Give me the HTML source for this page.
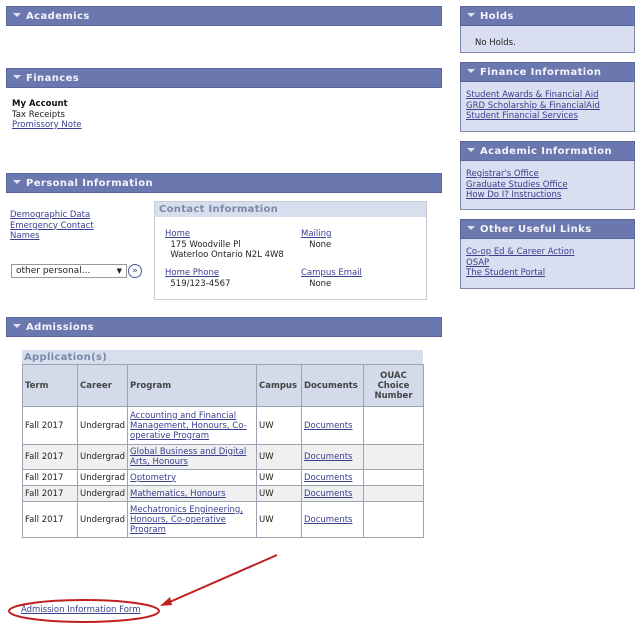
<!DOCTYPE html>
<html><head><style>
body{margin:0;width:640px;height:625px;background:#fff;position:relative;font-family:"DejaVu Sans","Liberation Sans",sans-serif;font-size:8.5px;color:#222;overflow:hidden}
.a{position:absolute}
.hd{position:absolute;background:#6b78b0;border:1px solid #58649a;color:#f4f4fa;font-weight:bold;font-size:10px;letter-spacing:.4px;box-sizing:border-box;height:20px;line-height:20px;padding-left:19px}
.hd:before{content:"";position:absolute;left:6px;top:6px;border-left:4px solid transparent;border-right:4px solid transparent;border-top:4px solid #dfe3f2}
a{color:#3a3f8f;text-decoration:underline}
.box{position:absolute;background:#d9dff0;border:1px solid #8088a8;box-sizing:border-box}
.box .hd{left:-1px;top:-1px;right:-1px}
.box .in{position:absolute;left:5px;top:27px;line-height:10.5px}
table{border-collapse:collapse;font-size:8.5px;table-layout:fixed}
td{border:1px solid #9da3b3;padding:0 2px;vertical-align:middle}
th{border:1px solid #9da3b3;background:#d3dbeb;color:#444;font-weight:bold;text-align:left;padding:0 2px}
</style></head><body>
<div class="hd" style="left:6px;top:6px;width:436px">Academics</div>
<div class="hd" style="left:6px;top:68px;width:436px">Finances</div>
<div class="a" style="left:12px;top:99px;line-height:10.5px"><b style="color:#111">My Account</b><br>Tax Receipts<br><a>Promissory Note</a></div>
<div class="hd" style="left:6px;top:173px;width:436px">Personal Information</div>
<div class="a" style="left:10px;top:210px;line-height:10.5px"><a>Demographic Data</a><br><a>Emergency Contact</a><br><a>Names</a></div>
<div class="a" style="left:11px;top:264px;width:116px;height:14px;border:1px solid #999;box-sizing:border-box;font-size:9px;line-height:12px;padding-left:4px">other personal...<span style="position:absolute;right:4px;font-size:7px">▼</span></div>
<div class="a" style="left:128px;top:264px;width:14px;height:14px;border:1px solid #4a5a9a;border-radius:50%;box-sizing:border-box;color:#3a4a8a;font-size:9px;line-height:12px;text-align:center">»</div>
<div class="a" style="left:154px;top:201px;width:273px;height:99px;border:1px solid #c6ccd8;box-sizing:border-box">
<div style="background:#d7dfee;height:15px;line-height:15px;padding-left:4px;color:#7a88aa;font-weight:bold;font-size:10px;letter-spacing:.3px">Contact Information</div>
<div class="a" style="left:10px;top:27px;line-height:10.5px"><a>Home</a><br>&nbsp;&nbsp;175 Woodville Pl<br>&nbsp;&nbsp;Waterloo Ontario N2L 4W8</div>
<div class="a" style="left:146px;top:27px;line-height:10.5px"><a>Mailing</a><br>&nbsp;&nbsp;&nbsp;None</div>
<div class="a" style="left:10px;top:66px;line-height:10.5px"><a>Home Phone</a><br>&nbsp;&nbsp;519/123-4567</div>
<div class="a" style="left:146px;top:66px;line-height:10.5px"><a>Campus Email</a><br>&nbsp;&nbsp;&nbsp;None</div>
</div>
<div class="hd" style="left:6px;top:317px;width:436px">Admissions</div>
<div class="a" style="left:22px;top:350px;width:401px;height:14px;background:#d7dfee;color:#7a88aa;font-weight:bold;font-size:10px;line-height:15px;padding-left:2px;box-sizing:border-box;letter-spacing:.3px">Application(s)</div>
<table class="a" style="left:22px;top:364px;width:401px">
<colgroup><col style="width:55px"><col style="width:50px"><col style="width:129px"><col style="width:45px"><col style="width:62px"><col style="width:60px"></colgroup>
<tr style="height:42px"><th>Term</th><th>Career</th><th>Program</th><th>Campus</th><th>Documents</th><th style="text-align:center">OUAC<br>Choice<br>Number</th></tr>
<tr style="height:38px"><td>Fall 2017</td><td>Undergrad</td><td><a>Accounting and Financial Management, Honours, Co-operative Program</a></td><td>UW</td><td><a>Documents</a></td><td></td></tr>
<tr style="height:25px;background:#f0f0f0"><td>Fall 2017</td><td>Undergrad</td><td><a>Global Business and Digital Arts, Honours</a></td><td>UW</td><td><a>Documents</a></td><td></td></tr>
<tr style="height:16px"><td>Fall 2017</td><td>Undergrad</td><td><a>Optometry</a></td><td>UW</td><td><a>Documents</a></td><td></td></tr>
<tr style="height:16px;background:#f0f0f0"><td>Fall 2017</td><td>Undergrad</td><td><a>Mathematics, Honours</a></td><td>UW</td><td><a>Documents</a></td><td></td></tr>
<tr style="height:36px"><td>Fall 2017</td><td>Undergrad</td><td><a>Mechatronics Engineering, Honours, Co-operative Program</a></td><td>UW</td><td><a>Documents</a></td><td></td></tr>
</table>
<div class="box" style="left:460px;top:6px;width:175px;height:47px"><div class="hd">Holds</div><div class="in" style="left:14px;top:31px">No Holds.</div></div>
<div class="box" style="left:460px;top:62px;width:175px;height:70px"><div class="hd">Finance Information</div><div class="in"><a>Student Awards &amp; Financial Aid</a><br><a>GRD Scholarship &amp; FinancialAid</a><br><a>Student Financial Services</a></div></div>
<div class="box" style="left:460px;top:141px;width:175px;height:69px"><div class="hd">Academic Information</div><div class="in"><a>Registrar's Office</a><br><a>Graduate Studies Office</a><br><a>How Do I? Instructions</a></div></div>
<div class="box" style="left:460px;top:219px;width:175px;height:70px"><div class="hd">Other Useful Links</div><div class="in"><a>Co-op Ed &amp; Career Action</a><br><a>OSAP</a><br><a>The Student Portal</a></div></div>
<div class="a" style="left:21px;top:605px"><a>Admission Information Form</a></div>
<svg class="a" style="left:0;top:540px" width="300" height="85">
<ellipse cx="84" cy="71" rx="75" ry="11" fill="none" stroke="#c02020" stroke-width="2"/>
<line x1="277" y1="15" x2="165" y2="64" stroke="#c02020" stroke-width="2"/>
<path d="M160 66 L170 57 L172 65 Z" fill="#c02020"/>
</svg>
</body></html>
